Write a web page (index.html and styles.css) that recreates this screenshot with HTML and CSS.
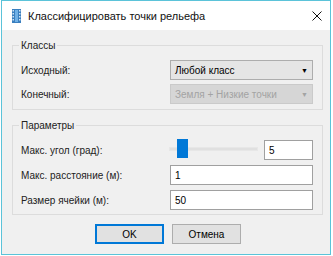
FILE: index.html
```html
<!DOCTYPE html>
<html lang="ru">
<head>
  <meta charset="UTF-8">
  <title>Классифицировать точки рельефа</title>
  <link rel="stylesheet" href="styles.css">
</head>
<body>
  <div class="window">
    <div class="titlebar">
      <svg class="app-icon" width="9" height="14" viewBox="0 0 9 14">
        <rect x="0" y="0" width="9" height="14" fill="#3a7fbf"/>
        <rect x="3" y="1" width="3" height="12" fill="#6fb0e6"/>
        <rect x="0.5" y="1" width="1.5" height="1.5" fill="#cfe4f5"/>
        <rect x="0.5" y="4" width="1.5" height="1.5" fill="#cfe4f5"/>
        <rect x="0.5" y="7" width="1.5" height="1.5" fill="#cfe4f5"/>
        <rect x="0.5" y="10" width="1.5" height="1.5" fill="#cfe4f5"/>
        <rect x="7" y="1" width="1.5" height="1.5" fill="#cfe4f5"/>
        <rect x="7" y="4" width="1.5" height="1.5" fill="#cfe4f5"/>
        <rect x="7" y="7" width="1.5" height="1.5" fill="#cfe4f5"/>
        <rect x="7" y="10" width="1.5" height="1.5" fill="#cfe4f5"/>
      </svg>
      <span class="title">Классифицировать точки рельефа</span>
      <svg class="close" width="10" height="10" viewBox="0 0 10 10">
        <path d="M0.5 0.5 L9.5 9.5 M9.5 0.5 L0.5 9.5" stroke="#111" stroke-width="1"/>
      </svg>
    </div>

    <div class="content">
      <div class="group">
        <span class="group-title">Классы</span>
        <div class="row">
          <label>Исходный:</label>
          <div class="combo">Любой класс <span class="arrow">▼</span></div>
        </div>
        <div class="row">
          <label>Конечный:</label>
          <div class="combo disabled">Земля + Низкие точки <span class="arrow">▼</span></div>
        </div>
      </div>

      <div class="group params">
        <span class="group-title">Параметры</span>
        <div class="row">
          <label>Макс. угол (град):</label>
          <div class="slider-wrap">
            <div class="slider">
              <div class="track"></div>
              <div class="thumb"></div>
            </div>
            <div class="textbox small">5</div>
          </div>
        </div>
        <div class="row">
          <label>Макс. расстояние (м):</label>
          <div class="textbox">1</div>
        </div>
        <div class="row">
          <label>Размер ячейки (м):</label>
          <div class="textbox">50</div>
        </div>
      </div>

      <div class="buttons">
        <button class="btn default">OK</button>
        <button class="btn">Отмена</button>
      </div>
    </div>
  </div>
</body>
</html>
```

FILE: styles.css
```css
body {
  margin: 0;
  background: #fff;
  font-family: 'Liberation Sans', sans-serif;
  font-size: 10px;
  color: #000;
}

.window {
  box-sizing: border-box;
  width: 330px;
  height: 255px;
  margin-left: 1px;
  border: 1px solid #5bc3d9;
  display: flex;
  flex-direction: column;
}

.titlebar {
  height: 29px;
  background: #fff;
  display: flex;
  align-items: center;
  padding-left: 10px;
  padding-right: 8px;
  flex-shrink: 0;
}

.app-icon {
  margin-top: 1px;
}

.title {
  margin-left: 7px;
  font-size: 11px;
  flex: 1;
  color: #111;
}

.content {
  flex: 1;
  background: #f0f0f0;
  padding: 15px 7px 0 10px;
}

.group {
  position: relative;
  border: 1px solid #dcdcdc;
  padding: 14px 9px 5px 8px;
  display: flex;
  flex-direction: column;
  gap: 4px;
}

.group.params {
  margin-top: 15px;
  padding-bottom: 4px;
  gap: 5px;
}

.group-title {
  position: absolute;
  top: -8px;
  left: 6px;
  padding: 0 2px;
  background: #f0f0f0;
  line-height: 15px;
  color: #222;
}

.row {
  display: flex;
  align-items: center;
  height: 20px;
}

.row label {
  width: 149px;
  flex-shrink: 0;
  color: #222;
}

.combo {
  box-sizing: border-box;
  flex: 1;
  height: 20px;
  background: #e5e5e5;
  border: 1px solid #adadad;
  padding-left: 4px;
  display: flex;
  align-items: center;
  justify-content: space-between;
}

.combo .arrow {
  font-size: 7px;
  margin-right: 4px;
}

.combo.disabled {
  background: #d6d6d6;
  border-color: #cacaca;
  color: #a3a3a3;
}

.slider-wrap {
  flex: 1;
  display: flex;
  align-items: center;
  justify-content: space-between;
}

.slider {
  position: relative;
  width: 89px;
  height: 20px;
  margin-left: -1px;
}

.track {
  position: absolute;
  left: 0;
  right: 0;
  top: 7px;
  height: 2px;
  background: #e0e0e0;
  border: 1px solid #e7e7e7;
}

.thumb {
  position: absolute;
  left: 8px;
  top: -1px;
  width: 11px;
  height: 19px;
  background: #0078d7;
}

.textbox {
  box-sizing: border-box;
  flex: 1;
  height: 20px;
  background: #fff;
  border: 1px solid #a0a0a0;
  padding-left: 4px;
  display: flex;
  align-items: center;
}

.textbox.small {
  flex: none;
  width: 49px;
}

.buttons {
  display: flex;
  justify-content: center;
  gap: 8px;
  margin-top: 9px;
  padding-left: 1px;
}

.btn {
  box-sizing: border-box;
  width: 69px;
  height: 20px;
  background: #e1e1e1;
  border: 1px solid #adadad;
  font-family: 'Liberation Sans', sans-serif;
  font-size: 10px;
  padding: 0;
}

.btn.default {
  border: 2px solid #0078d7;
}
```
